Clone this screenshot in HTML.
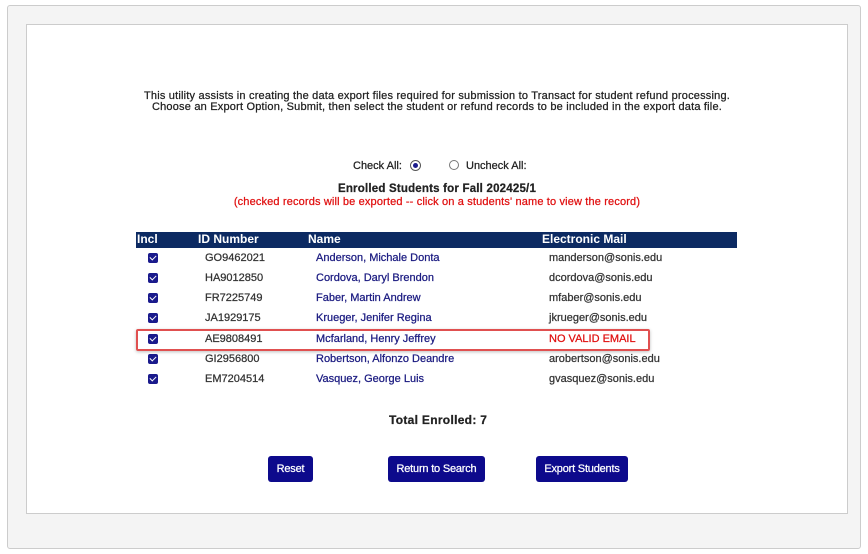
<!DOCTYPE html>
<html><head><meta charset="utf-8"><style>
*{margin:0;padding:0;box-sizing:border-box}
body{width:868px;height:554px;background:#fff;font-family:"Liberation Sans",Arial,sans-serif;position:relative;overflow:hidden;color:#222;-webkit-text-stroke:0.25px}
.a{position:absolute;white-space:nowrap}
#outer{left:7px;top:5px;width:854px;height:544px;background:#f4f4f4;border:1px solid #ccc;border-radius:3px}
#inner{left:26px;top:24px;width:822px;height:490px;background:#fff;border:1px solid #ccc}
.c{left:26px;width:822px;text-align:center;font-size:11px}
.hdr{left:136px;top:232px;width:601px;height:16px;background:#0c2a62}
.h{color:#fff;font-weight:bold;font-size:12px;top:232px;-webkit-text-stroke:0}
.cb{width:10px;height:10px;background:#1a1a8c;border-radius:2px;left:148px}
.cb:after{content:"";position:absolute;left:3px;top:1px;width:3px;height:5px;border:solid #fff;border-width:0 1.5px 1.5px 0;transform:rotate(45deg)}
.id{left:205px;font-size:11px;color:#333}
.nm{left:316px;font-size:11px;color:#1a1a80}
.em{left:549px;font-size:11px;color:#333}
.btn{background:#0d0a8c;color:#fff;font-size:11px;border-radius:3px;top:456px;height:26px;line-height:26px;text-align:center;letter-spacing:-0.2px}
</style></head><body>
<div class="a" id="outer"></div>
<div class="a" id="inner"></div>
<div class="a c" style="top:90px;letter-spacing:0.2px">This utility assists in creating the data export files required for submission to Transact for student refund processing.</div>
<div class="a c" style="top:101px;letter-spacing:0.2px">Choose an Export Option, Submit, then select the student or refund records to be included in the export data file.</div>
<div class="a" style="left:353px;top:160px;font-size:11px">Check All:</div>
<div class="a" style="left:410px;top:160px;width:11px;height:11px;border:1px solid #555;border-radius:50%;background:#fff"><div style="position:absolute;left:2px;top:2px;width:5px;height:5px;border-radius:50%;background:#1a1a8c"></div></div>
<div class="a" style="left:449px;top:160px;width:10px;height:10px;border:1px solid #777;border-radius:50%"></div>
<div class="a" style="left:466px;top:160px;font-size:11px">Uncheck All:</div>
<div class="a c" style="top:183px;font-weight:bold;font-size:11.5px;letter-spacing:0.2px">Enrolled Students for Fall 202425/1</div>
<div class="a c" style="top:196px;color:#e01010;letter-spacing:0.15px">(checked records will be exported -- click on a students' name to view the record)</div>
<div class="a hdr"></div>
<div class="a h" style="left:137px">Incl</div>
<div class="a h" style="left:198px">ID Number</div>
<div class="a h" style="left:308px">Name</div>
<div class="a h" style="left:542px">Electronic Mail</div>

<div class="a cb" style="top:253px"></div><div class="a id" style="top:252px">GO9462021</div><div class="a nm" style="top:252px">Anderson, Michale Donta</div><div class="a em" style="top:252px">manderson@sonis.edu</div>
<div class="a cb" style="top:273px"></div><div class="a id" style="top:272px">HA9012850</div><div class="a nm" style="top:272px">Cordova, Daryl Brendon</div><div class="a em" style="top:272px">dcordova@sonis.edu</div>
<div class="a cb" style="top:293px"></div><div class="a id" style="top:292px">FR7225749</div><div class="a nm" style="top:292px">Faber, Martin Andrew</div><div class="a em" style="top:292px">mfaber@sonis.edu</div>
<div class="a cb" style="top:313px"></div><div class="a id" style="top:312px">JA1929175</div><div class="a nm" style="top:312px">Krueger, Jenifer Regina</div><div class="a em" style="top:312px">jkrueger@sonis.edu</div>
<div class="a cb" style="top:334px"></div><div class="a id" style="top:333px">AE9808491</div><div class="a nm" style="top:333px">Mcfarland, Henry Jeffrey</div><div class="a em" style="top:333px;color:#e01010">NO VALID EMAIL</div>
<div class="a" style="left:136px;top:329px;width:514px;height:22px;border:2px solid #e05050;border-radius:2px;box-shadow:0 1px 3px rgba(0,0,0,.25)"></div>
<div class="a cb" style="top:354px"></div><div class="a id" style="top:353px">GI2956800</div><div class="a nm" style="top:353px">Robertson, Alfonzo Deandre</div><div class="a em" style="top:353px">arobertson@sonis.edu</div>
<div class="a cb" style="top:374px"></div><div class="a id" style="top:373px">EM7204514</div><div class="a nm" style="top:373px">Vasquez, George Luis</div><div class="a em" style="top:373px">gvasquez@sonis.edu</div>

<div class="a" style="left:389px;top:413px;font-size:12px;font-weight:bold;letter-spacing:0.3px">Total Enrolled: 7</div>
<div class="a btn" style="left:268px;width:45px">Reset</div>
<div class="a btn" style="left:388px;width:97px">Return to Search</div>
<div class="a btn" style="left:536px;width:92px">Export Students</div>
</body></html>
